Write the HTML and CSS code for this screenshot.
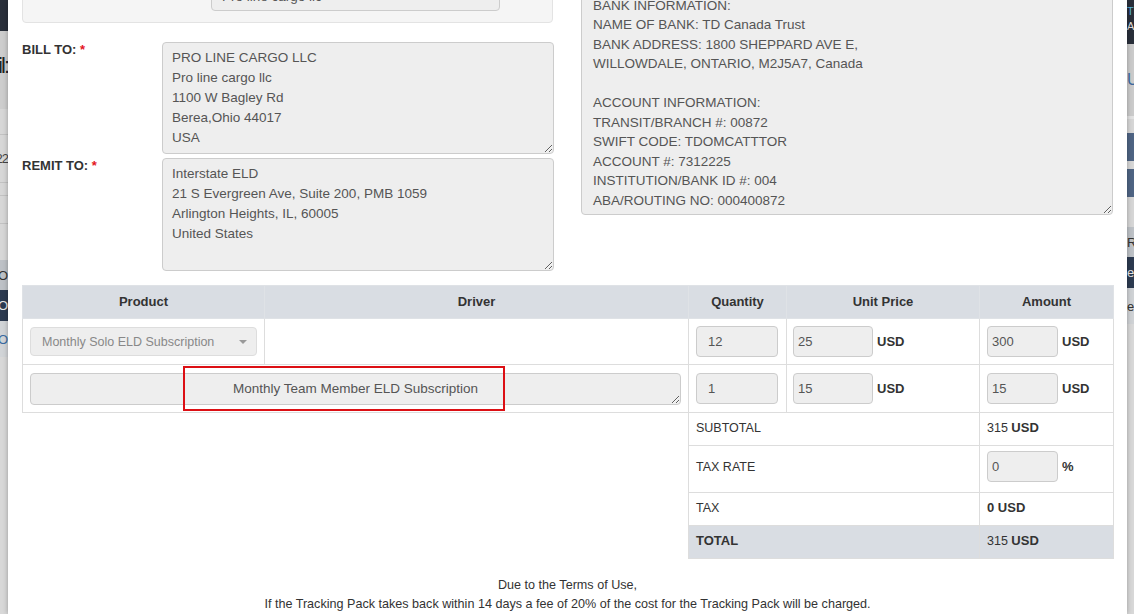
FILE: index.html
```html
<!DOCTYPE html>
<html lang="en">
<head>
    <meta charset="UTF-8">
    <title>Invoice - Interstate ELD</title>
    <link rel="stylesheet" href="styles.css">
</head>
<body>

<div class="page">
    <!-- dimmed page behind the modal -->
    <div class="backdrop backdrop-left">
        <div class="bk bk-nav"></div>
        <div class="bk bk-title"><span>Email:</span></div>
        <div class="bk bk-row"></div>
        <div class="bk bk-row bk-text"><span>2022</span></div>
        <div class="bk bk-row bk-thin"></div>
        <div class="bk bk-row bk-mid"></div>
        <div class="bk bk-fill"></div>
        <div class="bk bk-head"><span>PRO</span></div>
        <div class="bk bk-dark"><span>PRO</span></div>
        <div class="bk bk-link"><span>PRO</span></div>
        <div class="bk bk-rest"></div>
    </div>

    <div class="modal">
        <div class="modal-body">
            <div class="top">
                <div class="addresses">
                    <div class="well">
                        <input class="field well-input" value="Pro line cargo llc" readonly>
                    </div>
                    <div class="form-row first">
                        <label class="form-label">BILL TO: <span class="req">*</span></label>
                        <textarea class="field address bill" readonly>PRO LINE CARGO LLC
Pro line cargo llc
1100 W Bagley Rd
Berea,Ohio 44017
USA</textarea>
                    </div>
                    <div class="form-row">
                        <label class="form-label">REMIT TO: <span class="req">*</span></label>
                        <textarea class="field address remit" readonly>Interstate ELD
21 S Evergreen Ave, Suite 200, PMB 1059
Arlington Heights, IL, 60005
United States</textarea>
                    </div>
                </div>
                <div class="bank">
                    <textarea class="field bank-info" readonly>BANK INFORMATION:
NAME OF BANK: TD Canada Trust
BANK ADDRESS: 1800 SHEPPARD AVE E,
WILLOWDALE, ONTARIO, M2J5A7, Canada

ACCOUNT INFORMATION:
TRANSIT/BRANCH #: 00872
SWIFT CODE: TDOMCATTTOR
ACCOUNT #: 7312225
INSTITUTION/BANK ID #: 004
ABA/ROUTING NO: 000400872</textarea>
                </div>
            </div>

            <table class="items">
                <colgroup>
                    <col class="c-product">
                    <col class="c-driver">
                    <col class="c-qty">
                    <col class="c-price">
                    <col class="c-amount">
                </colgroup>
                <thead>
                    <tr>
                        <th>Product</th>
                        <th>Driver</th>
                        <th>Quantity</th>
                        <th>Unit Price</th>
                        <th>Amount</th>
                    </tr>
                </thead>
                <tbody>
                    <tr class="line line-1">
                        <td>
                            <div class="select">
                                <span>Monthly Solo ELD Subscription</span>
                                <span class="caret"></span>
                            </div>
                        </td>
                        <td></td>
                        <td><input class="field num qty" value="12" readonly></td>
                        <td>
                            <div class="money">
                                <input class="field num price" value="25" readonly>
                                <b>USD</b>
                            </div>
                        </td>
                        <td>
                            <div class="money">
                                <input class="field num amount" value="300" readonly>
                                <b>USD</b>
                            </div>
                        </td>
                    </tr>
                    <tr class="line line-2">
                        <td colspan="2" class="wide">
                            <textarea class="field product-name" readonly>Monthly Team Member ELD Subscription</textarea>
                            <div class="highlight"></div>
                        </td>
                        <td><input class="field num qty" value="1" readonly></td>
                        <td>
                            <div class="money">
                                <input class="field num price" value="15" readonly>
                                <b>USD</b>
                            </div>
                        </td>
                        <td>
                            <div class="money">
                                <input class="field num amount" value="15" readonly>
                                <b>USD</b>
                            </div>
                        </td>
                    </tr>
                    <tr class="sum">
                        <td colspan="2" class="blank"></td>
                        <td colspan="2">SUBTOTAL</td>
                        <td>315 <b>USD</b></td>
                    </tr>
                    <tr class="sum sum-rate">
                        <td colspan="2" class="blank"></td>
                        <td colspan="2">TAX RATE</td>
                        <td>
                            <div class="money">
                                <input class="field num amount" value="0" readonly>
                                <b>%</b>
                            </div>
                        </td>
                    </tr>
                    <tr class="sum">
                        <td colspan="2" class="blank"></td>
                        <td colspan="2">TAX</td>
                        <td><b>0 USD</b></td>
                    </tr>
                    <tr class="sum sum-total">
                        <td colspan="2" class="blank"></td>
                        <td colspan="2"><b>TOTAL</b></td>
                        <td>315 <b>USD</b></td>
                    </tr>
                </tbody>
            </table>

            <p class="terms">
                Due to the Terms of Use,<br>
                If the Tracking Pack takes back within 14 days a fee of 20% of the cost for the Tracking Pack will be charged.
            </p>
        </div>
    </div>

    <div class="backdrop backdrop-right">
        <div class="bk bk-nav bk-user"><span class="t">T</span><span class="a">A</span></div>
        <div class="bk bk-title-r"><span>U</span></div>
        <div class="bk bk-line"></div>
        <div class="bk bk-gap"></div>
        <div class="bk bk-btn"></div>
        <div class="bk bk-gap2"></div>
        <div class="bk bk-btn"></div>
        <div class="bk bk-gap3"></div>
        <div class="bk bk-head"><span>RI</span></div>
        <div class="bk bk-dark"><span>e</span></div>
        <div class="bk bk-plain"><span>e</span></div>
        <div class="bk bk-rest"></div>
    </div>
</div>

</body>
</html>
```

FILE: styles.css
```css
* {
    box-sizing: border-box;
}

body {
    margin: 0;
    font-family: "Liberation Sans", Arial, sans-serif;
    color: #333;
    background: #d8d8d8;
}

.page {
    display: flex;
    height: 614px;
    overflow: hidden;
}

/* background page strips */
.backdrop {
    flex: 0 0 8px;
    display: flex;
    flex-direction: column;
    overflow: hidden;
    background: #d9d9d9;
    font-size: 13px;
}

.backdrop-right {
    flex-basis: 7px;
}

.bk {
    display: flex;
    align-items: center;
    justify-content: flex-end;
    white-space: nowrap;
    overflow: hidden;
    flex-shrink: 0;
}

.backdrop-right .bk {
    justify-content: flex-start;
}

.bk-nav {
    height: 31px;
    background: #292f3a;
}

.bk-title {
    height: 78px;
    background: #cdcdcd;
    font-size: 22px;
    letter-spacing: -2px;
    color: #222;
    padding-bottom: 8px;
}

.bk-row {
    height: 26px;
    background: #d7d7d7;
    border-bottom: 1px solid #c2c2c2;
}

.bk-text {
    height: 48px;
    color: #444;
    letter-spacing: -1px;
}

.bk-thin {
    height: 13px;
}

.bk-mid {
    height: 28px;
}

.bk-fill {
    height: 36px;
    background: #d7d7d7;
}

.bk-head {
    height: 30px;
    background: #bdc1c6;
    color: #333;
}

.bk-dark {
    height: 31px;
    background: #2c3a50;
    color: #e6e6e6;
}

.bk-link {
    height: 36px;
    background: #d1d4d7;
    color: #3a6ba3;
}

.bk-rest {
    flex: 1;
    background: #d8d8d8;
}

.bk-user {
    height: 44px;
    flex-direction: column;
    align-items: flex-start;
    justify-content: center;
    font-size: 11px;
    line-height: 15px;
    padding-top: 4px;
}

.bk-user .t {
    color: #5ab4d6;
}

.bk-user .a {
    color: #ddd;
}

.bk-title-r {
    height: 72px;
    background: #cbcbcb;
    color: #3d6aa0;
    font-size: 16px;
}

.bk-line {
    height: 3px;
    background: #e2e2e2;
}

.bk-gap {
    height: 14px;
    background: #d6d6d6;
}

.bk-btn {
    height: 28px;
    background: #4e6483;
}

.bk-gap2 {
    height: 8px;
    background: #d6d6d6;
}

.bk-gap3 {
    height: 30px;
    background: #d6d6d6;
}

.bk-plain {
    height: 36px;
    background: #cfd2d5;
    color: #333;
}

/* modal */
.modal {
    flex: 1;
    position: relative;
    z-index: 1;
    background: #fff;
    box-shadow: 0 0 5px rgba(0, 0, 0, 0.3);
    overflow: hidden;
}

.modal-body {
    padding: 0 14px;
}

.top {
    display: flex;
    align-items: flex-start;
    gap: 27px;
    margin-top: -37px;
}

.addresses {
    width: 532px;
}

.field {
    background: #eee;
    border: 1px solid #ccc;
    border-radius: 4px;
    color: #555;
    font-family: "Liberation Sans", Arial, sans-serif;
    font-size: 13.5px;
    outline: none;
}

.well {
    width: 531px;
    height: 60px;
    background: #f5f5f5;
    border: 1px solid #e3e3e3;
    border-radius: 4px;
    padding: 17px 0 0 188px;
}

.well-input {
    width: 289px;
    height: 30px;
    padding: 0 10px;
}

.form-row {
    display: flex;
    margin-top: 4px;
}

.form-row.first {
    margin-top: 19px;
}

.form-label {
    width: 140px;
    font-size: 13px;
    font-weight: bold;
    line-height: 15px;
    color: #333;
}

.req {
    color: #e4141e;
}

.address {
    width: 392px;
    height: 112px;
    padding: 5px 9px 3px;
    line-height: 20px;
    resize: vertical;
}

.address.remit {
    height: 113px;
}

.bank {
    width: 532px;
}

.bank-info {
    width: 532px;
    height: 225px;
    margin-top: 27px;
    padding: 5px 11px 3px;
    line-height: 19.45px;
    resize: vertical;
    display: block;
}

/* line items */
.items {
    width: 1091px;
    margin-top: 14px;
    border-collapse: collapse;
    table-layout: fixed;
    font-size: 12.5px;
}

.c-product { width: 242px; }
.c-driver { width: 424px; }
.c-qty { width: 98px; }
.c-price { width: 193px; }
.c-amount { width: 134px; }

.items th {
    height: 33px;
    background: #d9dde3;
    border: 1px solid #dfe2e6;
    font-size: 13px;
    font-weight: bold;
    color: #333;
    padding: 0 8px 2px;
}

.items td {
    border: 1px solid #ddd;
    padding: 0 7px;
    vertical-align: middle;
}

.line-1 td {
    height: 46px;
}

.line-2 td {
    height: 48px;
}

.items td:nth-last-child(2) {
    padding-left: 6px;
}

.sum td:nth-last-child(2) {
    padding-left: 7px;
}

.select {
    width: 227px;
    height: 29px;
    display: flex;
    align-items: center;
    justify-content: space-between;
    padding: 0 9px 0 11px;
    background: #eee;
    border: 1px solid #ddd;
    border-radius: 4px;
    color: #888;
    font-size: 12.5px;
}

.caret {
    border-left: 4px solid transparent;
    border-right: 4px solid transparent;
    border-top: 4px solid #999;
}

.wide {
    position: relative;
}

.product-name {
    display: block;
    width: 651px;
    height: 32px;
    padding: 6px 12px;
    line-height: 18px;
    text-align: center;
    resize: vertical;
}

/* red marker drawn over the product field */
.highlight {
    position: absolute;
    left: 160px;
    top: 1px;
    width: 322px;
    height: 45px;
    border: 2px solid #dc0f14;
}

.num {
    height: 31px;
    font-size: 13px;
    padding: 0 4px;
}

.qty {
    width: 82px;
    padding: 0 11px;
}

.price {
    width: 80px;
}

.amount {
    width: 71px;
}

.money {
    display: flex;
    align-items: center;
    gap: 4px;
}

.money b,
.sum b {
    font-size: 13px;
    color: #333;
}

.sum td {
    height: 33px;
    padding-bottom: 3px;
}

.sum-rate td {
    height: 47px;
    padding-bottom: 5px;
}

.sum td.blank {
    border: none;
}

.sum-total td:not(.blank) {
    background: #d9dde3;
}

.terms {
    margin: 17px 0 0;
    text-align: center;
    font-size: 12.6px;
    line-height: 19px;
    color: #333;
}
```
